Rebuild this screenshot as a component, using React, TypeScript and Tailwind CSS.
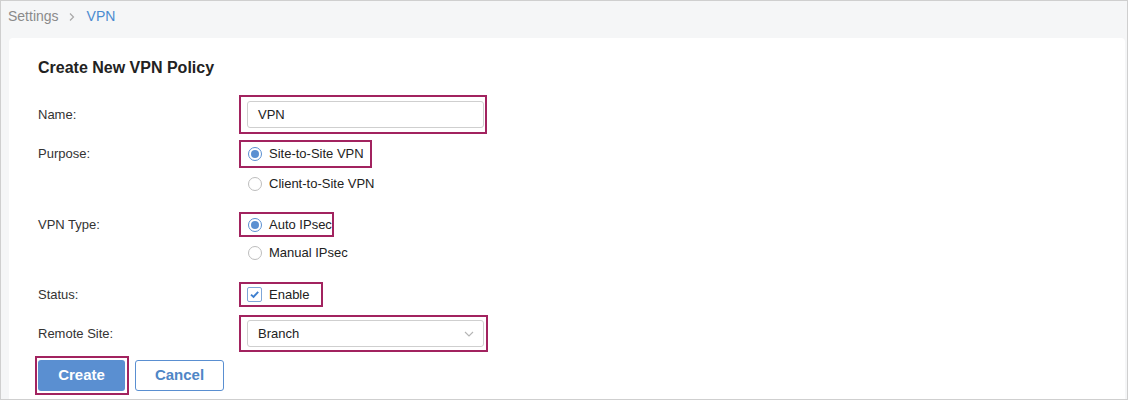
import React from "react";

const MAG = "border-[#a2235f]";

function Radio({ checked }: { checked?: boolean }) {
  return (
    <span
      className={`flex h-[14px] w-[14px] shrink-0 items-center justify-center rounded-full border ${
        checked ? "border-[#5a8fd1]" : "border-[#bdbdbd]"
      } bg-white`}
    >
      {checked && <span className="h-[8px] w-[8px] rounded-full bg-[#5a8fd1]" />}
    </span>
  );
}

function Label({ children }: { children: React.ReactNode }) {
  return <div className="w-[201px] shrink-0 text-[13px] text-[#333]">{children}</div>;
}

export default function App() {
  return (
    <div className="bg-white" style={{ fontFamily: '"Liberation Sans", Arial, sans-serif' }}>
      <div className="flex h-[400px] w-[1128px] flex-col overflow-hidden border border-[#cfcfcf] bg-[#f5f6f7]">
        <div className="flex h-[37px] shrink-0 items-center pl-[7px] pb-[6px] text-[14px]">
          <span className="text-[#8a8a8a]">Settings</span>
          <svg width="10" height="10" viewBox="0 0 10 10" className="ml-[8px] mr-[10px]">
            <path d="M3 1.5 L6.5 5 L3 8.5" fill="none" stroke="#a8a8a8" strokeWidth="1.2" />
          </svg>
          <span className="text-[#4a8bd0]">VPN</span>
        </div>
        <div className="ml-[8px] mr-[2px] flex-1 rounded-t-[4px] bg-white pl-[29px] pt-[20px]">
          <div className="h-[20px] text-[16px] font-bold leading-[20px] text-[#222]">
            Create New VPN Policy
          </div>

          {/* Name */}
          <div className="mt-[17px] flex h-[39px] items-center">
            <Label>Name:</Label>
            <div className={`flex h-[39px] w-[248px] items-center border-2 ${MAG} pl-[6px] pr-[1px]`}>
              <div className="flex h-[27px] w-full items-center rounded-[3px] border border-[#cfcfcf] pl-[10px] text-[13px] text-[#222]">
                VPN
              </div>
            </div>
          </div>

          {/* Purpose */}
          <div className="mt-[6px] flex items-start">
            <div className="flex h-[28px] items-center">
              <Label>Purpose:</Label>
            </div>
            <div className="flex flex-col">
              <div className={`flex h-[28px] w-[133px] items-center gap-[7px] border-2 ${MAG} pl-[7px] text-[13px] text-[#222]`}>
                <Radio checked />
                <span>Site-to-Site VPN</span>
              </div>
              <div className="mt-[2px] flex h-[28px] items-center gap-[7px] pl-[9px] text-[13px] text-[#222]">
                <Radio />
                <span>Client-to-Site VPN</span>
              </div>
            </div>
          </div>

          {/* VPN Type */}
          <div className="mt-[14px] flex items-start">
            <div className="flex h-[25px] items-center">
              <Label>VPN Type:</Label>
            </div>
            <div className="flex flex-col">
              <div className={`flex h-[25px] w-[95px] items-center gap-[7px] border-2 ${MAG} pl-[7px] text-[13px] text-[#222]`}>
                <Radio checked />
                <span>Auto IPsec</span>
              </div>
              <div className="mt-[3px] flex h-[26px] items-center gap-[7px] pl-[9px] text-[13px] text-[#222]">
                <Radio />
                <span>Manual IPsec</span>
              </div>
            </div>
          </div>

          {/* Status */}
          <div className="mt-[16px] flex h-[25px] items-center">
            <Label>Status:</Label>
            <div className={`flex h-[25px] w-[84px] items-center gap-[7px] border-2 ${MAG} pl-[6px] text-[13px] text-[#222]`}>
              <span className="flex h-[15px] w-[15px] items-center justify-center rounded-[2px] border border-[#7fa6d8] bg-white">
                <svg width="11" height="11" viewBox="0 0 11 11">
                  <path d="M2 5.6 L4.5 8 L9.2 2.8" fill="none" stroke="#3f7fcf" strokeWidth="1.9" />
                </svg>
              </span>
              <span>Enable</span>
            </div>
          </div>

          {/* Remote Site */}
          <div className="mt-[8px] flex h-[37px] items-center">
            <Label>Remote Site:</Label>
            <div className={`flex h-[37px] w-[249px] items-center border-2 ${MAG} pl-[6px] pr-[2px]`}>
              <div className="flex h-[27px] w-full items-center justify-between rounded-[3px] border border-[#cfcfcf] pl-[10px] pr-[9px] text-[13px] text-[#222]">
                <span>Branch</span>
                <svg width="10" height="8" viewBox="0 0 10 8">
                  <path d="M1 2 L5 6 L9 2" fill="none" stroke="#b5b5b5" strokeWidth="1.1" />
                </svg>
              </div>
            </div>
          </div>

          {/* Buttons */}
          <div className="-ml-[3px] mt-[4px] flex items-center gap-[6px]">
            <div className={`flex h-[39px] w-[94px] items-center border-2 ${MAG} pl-[1px]`}>
              <div className="flex h-[31px] w-[87px] items-center justify-center rounded-[3px] bg-[#5a8fd1] text-[15px] font-bold text-white">
                Create
              </div>
            </div>
            <div className="flex h-[31px] w-[89px] items-center justify-center rounded-[3px] border border-[#5a8fd1] bg-white text-[15px] font-bold text-[#4f86c6]">
              Cancel
            </div>
          </div>
        </div>
      </div>
    </div>
  );
}
